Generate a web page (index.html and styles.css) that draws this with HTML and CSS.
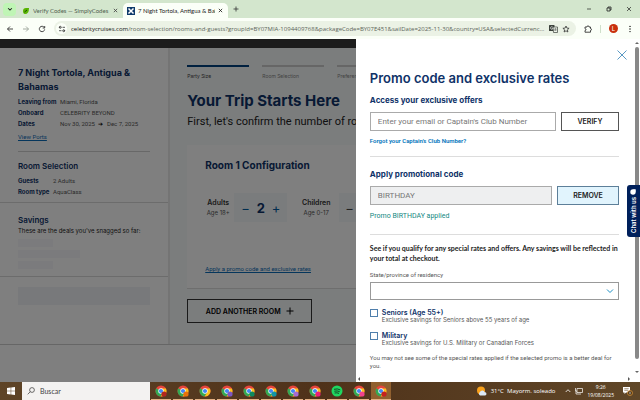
FILE: index.html
```html
<!DOCTYPE html>
<html lang="en">
<head>
<meta charset="UTF-8">
<meta name="viewport" content="width=device-width, initial-scale=1.0">
<title>7 Night Tortola, Antigua &amp; Bahamas</title>
<link rel="stylesheet" href="styles.css">
</head>
<body>

<svg class="defs" aria-hidden="true">
  <symbol id="chrome" viewBox="0 0 12 12">
    <circle cx="6" cy="6" r="5.5" fill="#e8453c"/>
    <path d="M6 6 1.2 3.3A5.5 5.5 0 0 0 5.6 11.5L8.3 7.3Z" fill="#34a853"/>
    <path d="M6 3.4H10.8A5.5 5.5 0 0 1 5.6 11.5L8.3 7.3Z" fill="#fbc11c"/>
    <circle cx="6" cy="6" r="2.7" fill="#fff"/>
    <circle cx="6" cy="6" r="2.1" fill="#4285f4"/>
  </symbol>
</svg>

<!-- Tabs -->
<header class="tabs">
  <button class="tab-menu" aria-label="Search tabs"><svg viewBox="0 0 8 8" width="6" height="6"><path d="M1.5 3 4 5.5 6.5 3" fill="none" stroke="#222" stroke-width="1.4"/></svg></button>
  <div class="tab">
    <svg viewBox="0 0 8 8" width="8" height="8"><path d="M1 4Q1 1 4 1H7Q7 7 3 7Q1 7 1 4Z" fill="#58b400"/><path d="M2.5 5 5 3" stroke="#174d00"/></svg>
    <span class="tab-title">Verify Codes — SimplyCodes</span>
    <button class="tab-close" aria-label="Close tab"><svg viewBox="0 0 6 6" width="5" height="5"><path d="M1 1 5 5M5 1 1 5" stroke="#444"/></svg></button>
  </div>
  <div class="tab tab-active">
    <svg viewBox="0 0 8 8" width="8" height="8"><rect width="8" height="8" fill="#0e3a6b"/><path d="M1.5 1.5 6.5 6.5M6.5 1.5 1.5 6.5" stroke="#fff" stroke-width="1.5"/></svg>
    <span class="tab-title">7 Night Tortola, Antigua &amp; Bah</span>
    <button class="tab-close" aria-label="Close tab"><svg viewBox="0 0 6 6" width="5" height="5"><path d="M1 1 5 5M5 1 1 5" stroke="#222"/></svg></button>
  </div>
  <button class="tab-new" aria-label="New tab"><svg viewBox="0 0 6 6" width="6" height="6"><path d="M3 .5V5.5M.5 3H5.5" stroke="#333" stroke-width=".8"/></svg></button>
  <div class="window-buttons">
    <button aria-label="Minimize"><svg viewBox="0 0 6 6" width="6" height="6"><path d="M1 3H5" stroke="#222" stroke-width=".7"/></svg></button>
    <button aria-label="Restore"><svg viewBox="0 0 6 6" width="6" height="6"><path d="M1 2H4V5H1ZM2 2V1H5V4H4" fill="none" stroke="#222" stroke-width=".8"/></svg></button>
    <button aria-label="Close"><svg viewBox="0 0 6 6" width="6" height="6"><path d="M1 1 5 5M5 1 1 5" stroke="#222" stroke-width=".7"/></svg></button>
  </div>
</header>

<!-- Toolbar -->
<nav class="toolbar">
  <button aria-label="Back"><svg viewBox="0 0 8 8" width="8" height="8"><path d="M7 4H1.5M4 1.5 1.5 4 4 6.5" fill="none" stroke="#333" stroke-width=".9"/></svg></button>
  <button aria-label="Forward"><svg viewBox="0 0 8 8" width="8" height="8"><path d="M1 4H6.5M4 1.5 6.5 4 4 6.5" fill="none" stroke="#9aa399" stroke-width=".9"/></svg></button>
  <button aria-label="Reload"><svg viewBox="0 0 8 8" width="8" height="8"><path d="M6.3 2.5A2.7 2.7 0 1 0 6.7 4.4M6.7 1V3H4.7" fill="none" stroke="#333" stroke-width=".9"/></svg></button>
  <div class="address">
    <span class="site-info"><svg viewBox="0 0 8 8" width="8" height="8"><path d="M1 2.3H2.5M4.5 2.3H7M1 5.7H3.5M5.5 5.7H7" stroke="#333" stroke-width=".8"/><circle cx="2.3" cy="2.3" r="1" fill="none" stroke="#333" stroke-width=".8"/><circle cx="5.7" cy="5.7" r="1" fill="none" stroke="#333" stroke-width=".8"/></svg></span>
    <span class="url"><b>celebritycruises.com</b>/room-selection/rooms-and-guests?groupId=BY07MIA-1094409768&amp;packageCode=BY07E451&amp;sailDate=2025-11-30&amp;country=USA&amp;selectedCurrenc...</span>
    <button aria-label="Translate"><svg viewBox="0 0 9 8" width="9" height="8"><rect width="5.5" height="6" rx=".6" fill="#3c423c"/><path d="M4 2H8.5V7.5H4.5Z" fill="#eef3ea" stroke="#3c423c" stroke-width=".7"/><path d="M5.3 4H7.6M6.5 3.3V4M7.2 4 5.5 6M5.8 4.3 7.3 6" stroke="#3c423c" stroke-width=".5"/><path d="M3.8 2.2A1.3 1.3 0 1 0 4 3.4H2.8" fill="none" stroke="#fff" stroke-width=".6"/></svg></button>
    <button aria-label="Bookmark"><svg viewBox="0 0 8 8" width="8" height="8"><path d="M4 1 4.9 3.1 7.1 3.3 5.4 4.8 5.9 7 4 5.8 2.1 7 2.6 4.8.9 3.3 3.1 3.1Z" fill="none" stroke="#333" stroke-width=".8"/></svg></button>
  </div>
  <button aria-label="Extensions"><svg viewBox="0 0 8 8" width="8" height="8"><path d="M1 2H3Q3 .8 4 .8T5 2H6.5V3.6Q7.5 3.6 7.5 4.5T6.5 5.4V7.2H1V5.5Q2 5.4 2 4.6T1 3.7Z" fill="none" stroke="#333" stroke-width=".9"/></svg></button>
  <span class="toolbar-line"></span>
  <span class="avatar">L</span>
  <button aria-label="Menu"><svg viewBox="0 0 8 8" width="8" height="8"><circle cx="4" cy="1.4" r=".7"/><circle cx="4" cy="4" r=".7"/><circle cx="4" cy="6.6" r=".7"/></svg></button>
</nav>

<div class="page">
  <div class="site-header"></div>
  <div class="columns">
    <aside class="summary">
      <section class="trip">
        <h2>7 Night Tortola, Antigua &amp; Bahamas</h2>
        <dl class="facts">
          <dt>Leaving from</dt><dd>Miami, Florida</dd>
          <dt>Onboard</dt><dd>CELEBRITY BEYOND</dd>
          <dt>Dates</dt><dd>Nov 30, 2025 <span class="arrow">➔</span> Dec 7, 2025</dd>
        </dl>
        <a href="#">View Ports</a>
      </section>
      <section class="room-selection">
        <h3>Room Selection</h3>
        <dl class="facts facts-narrow">
          <dt>Guests</dt><dd>2 Adults</dd>
          <dt>Room type</dt><dd>AquaClass</dd>
        </dl>
      </section>
      <section class="savings">
        <h3>Savings</h3>
        <p>These are the deals you've snagged so far:</p>
        <div class="skeleton"></div>
        <div class="skeleton skeleton-wide"></div>
        <div class="skeleton"></div>
      </section>
      <section class="total">
        <div class="skeleton skeleton-block"></div>
      </section>
    </aside>

    <main class="booking">
      <ol class="steps">
        <li class="current">Party Size</li>
        <li>Room Selection</li>
        <li>Preferences</li>
      </ol>
      <h1>Your Trip Starts Here</h1>
      <p class="intro">First, let's confirm the number of rooms</p>
      <section class="room-card">
        <h2>Room 1 Configuration</h2>
        <div class="guests">
          <div class="guest-label"><b>Adults</b><span>Age 18+</span></div>
          <div class="counter"><button aria-label="Fewer adults">−</button><output>2</output><button aria-label="More adults">+</button></div>
          <div class="guest-label guest-children"><b>Children</b><span>Age 0-17</span></div>
          <div class="counter counter-off"><button aria-label="Fewer children">−</button></div>
        </div>
        <a href="#">Apply a promo code and exclusive rates</a>
      </section>
      <button class="add-room">ADD ANOTHER ROOM <svg viewBox="0 0 8 8" width="8" height="8"><path d="M4 .5V7.5M.5 4H7.5" stroke="#000"/></svg></button>
    </main>
  </div>

  <div class="backdrop"></div>

  <div class="drawer">
    <div class="drawer-body">
      <button class="drawer-close" aria-label="Close"><svg viewBox="0 0 10 10" width="10" height="10"><path d="M.5.5 9.5 9.5M9.5.5.5 9.5" stroke="#2f7fb5" stroke-width=".8"/></svg></button>
      <h2>Promo code and exclusive rates</h2>

      <form class="block">
        <h3><label for="club">Access your exclusive offers</label></h3>
        <div class="field">
          <input type="text" id="club" placeholder="Enter your email or Captain's Club Number">
          <button type="button" class="verify">VERIFY</button>
        </div>
        <a href="#">Forgot your Captain's Club Number?</a>
      </form>

      <form class="block block-promo">
        <h3><label for="promo">Apply promotional code</label></h3>
        <div class="field">
          <input type="text" id="promo" value="BIRTHDAY" disabled>
          <button type="button" class="remove">REMOVE</button>
        </div>
        <p class="applied">Promo BIRTHDAY applied</p>
      </form>

      <form class="qualify">
        <p class="lead">See if you qualify for any special rates and offers. Any savings will be reflected in your total at checkout.</p>
        <label class="state-label" for="state">State/province of residency</label>
        <div class="select">
          <select id="state"><option></option></select>
          <svg viewBox="0 0 8 8" width="8" height="8"><path d="M1 2.5 4 5.5 7 2.5" fill="none" stroke="#1c8fc4"/></svg>
        </div>
        <div class="check">
          <input type="checkbox" id="seniors">
          <label for="seniors"><b>Seniors (Age 55+)</b><span>Exclusive savings for Seniors above 55 years of age</span></label>
        </div>
        <div class="check">
          <input type="checkbox" id="military">
          <label for="military"><b>Military</b><span>Exclusive savings for U.S. Military or Canadian Forces</span></label>
        </div>
        <p class="note">You may not see some of the special rates applied if the selected promo is a better deal for you.</p>
      </form>
    </div>
    <div class="vbar">
      <svg viewBox="0 0 4 4" width="4" height="4"><path d="M0 3 2 1 4 3Z" fill="#666"/></svg>
      <span class="thumb"></span>
      <svg viewBox="0 0 4 4" width="4" height="4"><path d="M0 1 2 3 4 1Z" fill="#666"/></svg>
    </div>
    <div class="hbar">
      <svg viewBox="0 0 4 4" width="4" height="4"><path d="M3 0 1 2 3 4Z" fill="#555"/></svg>
      <svg viewBox="0 0 4 4" width="4" height="4"><path d="M1 0 3 2 1 4Z" fill="#555"/></svg>
    </div>
  </div>

  <button class="chat">Chat with us <svg viewBox="0 0 6 6" width="6" height="6"><circle cx="3" cy="3" r="2.7" fill="#fff"/><path d="M.3 3V5.7H3Z" fill="#fff"/></svg></button>
</div>

<!-- Taskbar -->
<footer class="taskbar">
  <button class="start" aria-label="Start"><svg viewBox="0 0 8 8" width="8" height="8"><path d="M0 1 3.7.5V3.8H0ZM4.2.5 8 0V3.8H4.2ZM0 4.3H3.7V7.5L0 7ZM4.2 4.3H8V8L4.2 7.5Z" fill="#fff"/></svg></button>
  <div class="search">
    <svg viewBox="0 0 8 8" width="8" height="8"><circle cx="5" cy="3" r="2.4" fill="none" stroke="#333" stroke-width=".7"/><path d="M3.3 4.7.7 7.3" stroke="#333" stroke-width=".7"/></svg>
    <input type="text" aria-label="Buscar" placeholder="Buscar">
  </div>
  <div class="apps">
    <span class="app"><svg viewBox="0 0 12 12"><use href="#chrome"/><circle cx="9" cy="9" r="2.6" fill="#b3261e"/></svg></span>
    <span class="app"><svg viewBox="0 0 12 12"><use href="#chrome"/><circle cx="9" cy="9" r="2.6" fill="#e8710a"/></svg></span>
    <span class="app"><svg viewBox="0 0 12 12"><use href="#chrome"/></svg></span>
    <span class="app"><svg viewBox="0 0 12 12"><use href="#chrome"/><circle cx="9" cy="9" r="2.6" fill="#7e57c2"/></svg></span>
    <span class="app"><svg viewBox="0 0 12 12"><use href="#chrome"/><circle cx="9" cy="9" r="2.6" fill="#0f8a5f"/></svg></span>
    <span class="app"><svg viewBox="0 0 12 12"><use href="#chrome"/><circle cx="9" cy="9" r="2.6" fill="#1295a8"/></svg></span>
    <span class="app"><svg viewBox="0 0 12 12"><use href="#chrome"/><circle cx="9" cy="9" r="2.6" fill="#a66bd0"/></svg></span>
    <span class="app"><svg viewBox="0 0 12 12"><use href="#chrome"/><circle cx="9" cy="9" r="2.6" fill="#e91e78"/></svg></span>
    <span class="app"><svg viewBox="0 0 12 12"><circle cx="6" cy="6" r="5.5" fill="#1ed760"/><path d="M3 4.3Q6.5 3.3 9.3 4.9M3.3 6.2Q6.3 5.4 8.7 6.7M3.6 8Q6 7.4 8 8.4" fill="none" stroke="#12391f" stroke-width=".9"/></svg></span>
    <span class="app"><svg viewBox="0 0 12 12"><use href="#chrome"/><circle cx="9" cy="9" r="2.6" fill="#f0418b"/></svg></span>
    <span class="app app-active"><svg viewBox="0 0 12 12"><use href="#chrome"/><circle cx="9" cy="9" r="2.6" fill="#c5221f"/></svg></span>
  </div>
  <div class="tray">
    <svg viewBox="0 0 11 10" width="11" height="10"><circle cx="5" cy="4.5" r="4" fill="#f9a11b"/><path d="M4 9.5A2 2 0 0 1 4 6 2.5 2.5 0 0 1 8.7 6.3 1.6 1.6 0 0 1 9 9.5Z" fill="#dce9f7"/></svg>
    <span class="weather">31°C&nbsp; Mayorm. soleado</span>
    <svg viewBox="0 0 6 6" width="6" height="6"><path d="M.7 4 3 1.7 5.3 4" fill="none" stroke="#fff" stroke-width=".8"/></svg>
    <svg viewBox="0 0 8 8" width="8" height="8"><path d="M2 1.5H7.5V5.5H2ZM3 7H6M.5 1V4H2M1 4V7H3" fill="none" stroke="#fff" stroke-width=".7"/></svg>
    <span class="clock">9:26<br>19/08/2025</span>
    <svg viewBox="0 0 11 10" width="11" height="10"><path d="M1 1H8V6.5H4L2.5 8V6.5H1Z" fill="#fff"/><path d="M2.3 2.7H6.7M2.3 4.3H6" stroke="#6b5030" stroke-width=".6"/><circle cx="8" cy="7" r="2.5" fill="#4a3215" stroke="#e39b3b" stroke-width=".7"/><path d="M8 5.7V8.3" stroke="#fff" stroke-width=".7"/></svg>
  </div>
</footer>

</body>
</html>
```
FILE: styles.css
```css
* {
  box-sizing: border-box;
}
body {
  margin: 0;
  height: 100vh;
  display: flex;
  flex-direction: column;
  overflow: hidden;
  font-family: Inter, "Open Sans", sans-serif;
  font-size: 6px;
  color: #222;
}
h1, h2, h3, p, dl, dd, ol {
  margin: 0;
  padding: 0;
}
button {
  display: flex;
  align-items: center;
  justify-content: center;
  padding: 0;
  border: none;
  background: none;
  font-family: inherit;
  color: inherit;
  cursor: pointer;
}
input, select {
  margin: 0;
  font-family: inherit;
}
svg {
  flex: none;
  display: block;
}
.defs {
  position: absolute;
  width: 0;
  height: 0;
}

/* Browser */
.tabs {
  flex: none;
  height: 18px;
  display: flex;
  align-items: center;
  background: #d3e6cd;
  font-family: Lato, sans-serif;
}
.tab-menu {
  width: 13px;
  height: 13px;
  margin: 0 2px 0 3px;
  border-radius: 4px;
  background: #bff5b5;
}
.tab {
  width: 105px;
  height: 15px;
  padding: 0 5px 0 4px;
  margin-top: 3px;
  display: flex;
  align-items: center;
  gap: 3px;
  color: #50604f;
}
.tab-active {
  background: #fbfff8;
  border-radius: 5px 5px 0 0;
  color: #222;
}
.tab-title {
  flex: 1;
  overflow: hidden;
  white-space: nowrap;
}
.tab-new {
  margin-left: 5px;
}
.window-buttons {
  margin-left: auto;
  padding-right: 8px;
  display: flex;
  gap: 14px;
}
.toolbar {
  flex: none;
  height: 21px;
  padding: 0 6px;
  display: flex;
  align-items: center;
  gap: 8px;
  background: #fbfff8;
}
.address {
  flex: 1;
  min-width: 0;
  height: 15px;
  padding: 0 6px 0 2px;
  display: flex;
  align-items: center;
  gap: 4px;
  border-radius: 8px;
  background: #ebf2e5;
}
.site-info {
  width: 11px;
  height: 11px;
  display: flex;
  align-items: center;
  justify-content: center;
  border-radius: 50%;
  background: #fbfff8;
}
.url {
  flex: 1;
  overflow: hidden;
  white-space: nowrap;
  font-family: "Open Sans", sans-serif;
  color: #5a6358;
}
.url b {
  font-weight: 400;
  color: #111;
}
.toolbar-line {
  width: 1px;
  height: 8px;
  background: #cfe0ca;
}
.avatar {
  width: 9px;
  height: 9px;
  border-radius: 50%;
  background: #c9300c;
  color: #fff;
  line-height: 9px;
  text-align: center;
}

/* Page under the drawer */
.page {
  position: relative;
  flex: 1;
  min-height: 0;
  overflow: hidden;
  background: #fff;
}
.site-header {
  height: 9px;
  background: #383838;
}
.columns {
  display: flex;
  border-bottom: 1px solid #ccc;
}
.summary {
  width: 26.6%;
  flex: none;
  padding-bottom: 39px;
  border-right: 2px solid #e8e8e8;
}
.summary h2 {
  font-size: 9px;
  line-height: 14px;
  color: #0f3268;
}
.summary h3 {
  font-size: 8px;
  line-height: 10px;
  font-weight: 600;
  color: #0f3268;
}
.summary a,
.room-card a {
  font-family: Roboto, sans-serif;
  font-size: 6px;
  line-height: 8px;
  color: #0b6cb8;
}
.facts {
  display: grid;
  grid-template-columns: 42px 1fr;
  line-height: 11px;
  color: #555;
}
.facts-narrow {
  grid-template-columns: 35px 1fr;
}
.facts dt {
  font-weight: 700;
  color: #0f3268;
  white-space: nowrap;
}
.facts dd {
  font-family: Roboto, sans-serif;
  white-space: nowrap;
}
.arrow {
  margin: 0 2px;
  color: #000;
}
.trip {
  margin: 0 18px;
  padding: 18px 0 10px;
  border-bottom: 1px solid #d0d0d0;
}
.trip .facts {
  margin: 2px 0 4px;
}
.room-selection {
  padding: 9px 18px 5px;
  border-bottom: 1px solid #d8d8d8;
}
.room-selection .facts {
  margin-top: 4px;
}
.savings {
  padding: 12px 16px 7px 18px;
  border-bottom: 1px solid #d8d8d8;
}
.savings p {
  margin: 2px 0 4px;
  line-height: 8px;
  white-space: nowrap;
}
.skeleton {
  width: 35px;
  height: 8px;
  margin-bottom: 3px;
  background: #f6f7fa;
}
.skeleton:last-child {
  margin-bottom: 0;
}
.skeleton-wide {
  width: 62px;
}
.total {
  padding: 10px 18px 0;
}
.skeleton-block {
  width: 100%;
  height: 18px;
  background: #f1f2f6;
}
.booking {
  flex: 1;
  min-width: 0;
  padding: 17px 14px 20px 17px;
  background: #f6fafb;
}
.steps {
  display: flex;
  gap: 13px;
  list-style: none;
}
.steps li {
  flex: none;
  width: 62px;
  padding-top: 5px;
  border-top: 2px solid #ccc;
  line-height: 8px;
  font-size: 5px;
  color: #888;
}
.steps .current {
  border-color: #00407f;
  color: #444;
}
.booking h1 {
  margin-top: 11px;
  font-size: 15px;
  line-height: 20px;
  font-weight: 700;
  color: #0f3268;
}
.intro {
  margin-top: 3px;
  font-family: Roboto, sans-serif;
  font-size: 11px;
  line-height: 16px;
  white-space: nowrap;
}
.room-card {
  margin-top: 15px;
  padding: 12px 18px 15px;
  border-bottom: 1px solid #ddd;
  background: #fff;
}
.room-card h2 {
  font-size: 10px;
  line-height: 16px;
  font-weight: 700;
  color: #0f3268;
}
.guests {
  margin: 20px 0 43px;
  display: flex;
  align-items: center;
}
.guest-label {
  width: 26px;
  margin-right: 3px;
  line-height: 10px;
  text-align: center;
  white-space: nowrap;
  color: #555;
}
.guest-label b {
  display: block;
  font-size: 7px;
  font-weight: 600;
  color: #333;
}
.guest-children {
  width: 30px;
  margin: 0 8px 0 14px;
}
.counter {
  width: 53px;
  height: 29px;
  display: flex;
  align-items: center;
  justify-content: space-evenly;
  background: #f4f9fb;
}
.counter button {
  font-size: 13px;
  color: #005b9f;
}
.counter output {
  font-size: 13px;
  font-weight: 700;
  color: #0f3268;
}
.counter-off {
  justify-content: flex-start;
  padding-left: 6px;
}
.counter-off button {
  color: #444;
}
.add-room {
  width: 125px;
  height: 24px;
  margin-top: 10px;
  gap: 5px;
  border: 1px solid #333;
  font-size: 7px;
  font-weight: 600;
  color: #000;
}
.backdrop {
  position: absolute;
  inset: 0;
  background: rgba(0, 0, 0, .5);
}

/* Drawer */
.drawer {
  position: absolute;
  top: 0;
  right: 0;
  bottom: 0;
  width: 44.4%;
  display: grid;
  grid-template-columns: minmax(0, 1fr) 6px;
  grid-template-rows: minmax(0, 1fr) 6px;
  background: #fff;
}
.drawer-body {
  padding: 11px 15px 0 14px;
  overflow: hidden;
}
.drawer-close {
  margin: 0 -8px 0 auto;
}
.drawer-body h2 {
  margin-top: 8px;
  font-size: 13px;
  line-height: 20px;
  font-weight: 600;
  color: #0f3268;
}
.drawer-body h3 {
  font-size: 8px;
  line-height: 12px;
  color: #0f3268;
}
.block {
  padding: 6px 0 11px;
  border-bottom: 1px solid #ddd;
}
.block-promo {
  padding: 11px 0 13px;
}
.block a {
  display: block;
  font-family: Roboto, sans-serif;
  font-weight: 600;
  line-height: 8px;
  color: #0073bb;
  text-decoration: none;
}
.field {
  margin: 6px 0;
  display: flex;
  gap: 5px;
}
.field input {
  flex: 1;
  min-width: 0;
  height: 19px;
  padding: 0 7px;
  border: 1px solid #aaa;
  font-family: Roboto, sans-serif;
  font-size: 8px;
  color: #777;
}
.field input::placeholder {
  color: #777;
}
.field input:disabled {
  background: #eeeff0;
}
.field button {
  height: 19px;
  border: 1px solid #555;
  font-size: 7px;
  font-weight: 600;
}
.verify {
  width: 58px;
}
.field .remove {
  width: 62px;
  border-color: #5d7f99;
  background: #e1f4fd;
}
.applied {
  font-size: 7px;
  line-height: 10px;
  font-family: Roboto, sans-serif;
  color: #12877f;
}
.qualify {
  padding-top: 8px;
}
.lead {
  font-family: Lato, sans-serif;
  font-size: 7px;
  line-height: 10px;
  font-weight: 700;
}
.state-label {
  display: block;
  margin: 8px 0 3px;
  font-family: Roboto, sans-serif;
  line-height: 8px;
  color: #555;
}
.select {
  display: grid;
  align-items: center;
}
.select select,
.select svg {
  grid-area: 1 / 1;
}
.select select {
  appearance: none;
  width: 100%;
  height: 18px;
  border: 1px solid #999;
  border-radius: 0;
  background: #fff;
}
.select svg {
  justify-self: end;
  margin-right: 5px;
  pointer-events: none;
}
.check {
  margin-top: 9px;
  display: flex;
  gap: 4px;
}
.check input {
  appearance: none;
  width: 8px;
  height: 8px;
  border: 1px solid #4f7fac;
}
.check label {
  line-height: 7px;
  color: #555;
}
.check b {
  display: block;
  font-size: 7px;
  font-weight: 600;
  color: #0f3268;
}
.check span {
  display: block;
}
.note {
  margin-top: 8px;
  font-family: Roboto, sans-serif;
  line-height: 8px;
  color: #555;
}
.vbar {
  padding: 2px 1px;
  display: flex;
  flex-direction: column;
  align-items: center;
  gap: 2px;
}
.vbar .thumb {
  flex: 1;
  width: 4px;
  margin-bottom: 9px;
  border-radius: 2px;
  background: #888;
}
.hbar {
  padding: 0 3px 0 1px;
  display: flex;
  align-items: center;
  justify-content: space-between;
}
.chat {
  position: absolute;
  top: 146px;
  right: 0;
  width: 13px;
  height: 52px;
  gap: 2px;
  writing-mode: vertical-rl;
  transform: rotate(180deg);
  border-radius: 0 3px 3px 0;
  background: #00205b;
  color: #fff;
  font-size: 6px;
  font-weight: 600;
  white-space: nowrap;
}

/* Taskbar */
.taskbar {
  flex: none;
  height: 18px;
  display: flex;
  align-items: stretch;
  background: linear-gradient(90deg, #5e4427, #4f321a 50%, #604728);
  font-family: "Open Sans", sans-serif;
  color: #fff;
}
.start {
  width: 22px;
}
.search {
  width: 20%;
  padding-left: 5px;
  display: flex;
  align-items: center;
  gap: 5px;
  background: #f3f2f1;
}
.search input {
  min-width: 0;
  flex: 1;
  padding: 0;
  border: none;
  background: none;
  font-family: Lato, sans-serif;
  font-size: 7px;
}
.search input::placeholder {
  color: #444;
}
.apps {
  padding-left: 1px;
  display: flex;
  gap: 2px;
}
.app {
  width: 20px;
  display: flex;
  align-items: center;
  justify-content: center;
  border-bottom: 1px solid #e5b184;
}
.app svg {
  width: 12px;
  height: 12px;
}
.app-active {
  background: #90602f;
}
.tray {
  margin-left: auto;
  padding-right: 7px;
  display: flex;
  align-items: center;
  gap: 4px;
}
.weather {
  margin-right: 6px;
  font-size: 6px;
}
.clock {
  margin: 0 4px 0 0;
  line-height: 8px;
  font-size: 5px;
  text-align: center;
}
```
